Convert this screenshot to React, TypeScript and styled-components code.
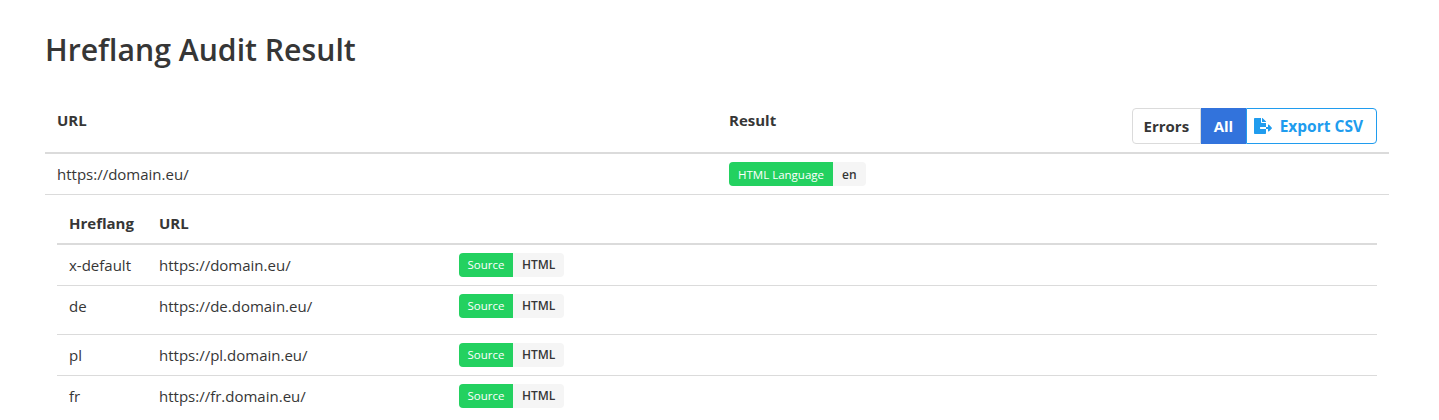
import styled, { createGlobalStyle } from "styled-components";
import { FaFileExport } from "react-icons/fa";

const rows = [
  { lang: "x-default", url: "https://domain.eu/" },
  { lang: "de", url: "https://de.domain.eu/", tall: true },
  { lang: "pl", url: "https://pl.domain.eu/" },
  { lang: "fr", url: "https://fr.domain.eu/" },
];

const App = () => {
  return (
    <Page>
      <GlobalStyle />
      <Title>Hreflang Audit Result</Title>
      <MainTable>
        <thead>
          <tr>
            <MainHead $width={648}>URL</MainHead>
            <MainHead>
              <HeadRow>
                <span>Result</span>
                <Actions>
                  <PlainButton>Errors</PlainButton>
                  <ActiveButton>All</ActiveButton>
                  <ExportButton>
                    <FaFileExport size={18} />
                    Export CSV
                  </ExportButton>
                </Actions>
              </HeadRow>
            </MainHead>
          </tr>
        </thead>
        <tbody>
          <tr>
            <MainCell>https://domain.eu/</MainCell>
            <MainCell>
              <Tags>
                <GreenTag $pad={9}>HTML Language</GreenTag>
                <GreyTag>en</GreyTag>
              </Tags>
            </MainCell>
          </tr>
          <tr>
            <NestedCell colSpan={2}>
              <SubTable>
                <thead>
                  <tr>
                    <SubHead $width={66}>Hreflang</SubHead>
                    <SubHead $width={276}>URL</SubHead>
                    <SubHead />
                  </tr>
                </thead>
                <tbody>
                  {rows.map((row) => (
                    <SubRow key={row.lang} $tall={row.tall}>
                      <SubCell>{row.lang}</SubCell>
                      <SubCell>{row.url}</SubCell>
                      <SubCell>
                        <Tags>
                          <GreenTag $pad={8.5}>Source</GreenTag>
                          <GreyTag>HTML</GreyTag>
                        </Tags>
                      </SubCell>
                    </SubRow>
                  ))}
                </tbody>
              </SubTable>
            </NestedCell>
          </tr>
        </tbody>
      </MainTable>
    </Page>
  );
};

export default App;

const GlobalStyle = createGlobalStyle`
  html, body {
    margin: 0;
    background: #fff;
    overflow: hidden;
  }
  body {
    font-family: "Open Sans", "Noto Sans", sans-serif;
    font-size: 15px;
    color: #363636;
  }
`;

const Page = styled.div`
  height: 420px;
  padding: 30px 50px 0 45px;
  box-sizing: border-box;
  overflow: hidden;
`;

const Title = styled.h1`
  margin: 0 0 38px;
  font-size: 30.2px;
  line-height: 40px;
  font-weight: 600;
  color: #363636;
`;

const MainTable = styled.table`
  width: 100%;
  border-collapse: collapse;
  table-layout: fixed;
`;

const MainHead = styled.th<{ $width?: number }>`
  width: ${(p) => (p.$width ? `${p.$width}px` : "auto")};
  height: 44px;
  padding: 0 12px;
  text-align: left;
  font-weight: 700;
  font-size: 15px;
  border-bottom: 2px solid #dbdbdb;
  vertical-align: top;
  line-height: 25px;
`;

const HeadRow = styled.div`
  display: flex;
  justify-content: space-between;
  align-items: flex-start;
`;

const Actions = styled.div`
  display: flex;
  height: 36px;
`;

const PlainButton = styled.button`
  font: inherit;
  font-weight: 700;
  padding: 0 11px;
  color: #363636;
  background: #fff;
  border: 1px solid #dbdbdb;
  border-radius: 4px 0 0 4px;
`;

const ActiveButton = styled.button`
  font: inherit;
  font-weight: 700;
  padding: 0 11.5px;
  color: #fff;
  background: #3273dc;
  border: 1px solid #3273dc;
`;

const ExportButton = styled.button`
  font: inherit;
  font-size: 15.5px;
  font-weight: 700;
  display: flex;
  align-items: center;
  gap: 8px;
  padding: 0 13px 0 7px;
  color: #209cee;
  background: #fff;
  border: 1px solid #209cee;
  border-radius: 0 4px 4px 0;
`;

const MainCell = styled.td`
  height: 40px;
  padding: 0 12px;
  font-size: 15px;
  border-bottom: 1px solid #dbdbdb;
`;

const NestedCell = styled.td`
  padding: 8px 12px 0;
`;

const SubTable = styled.table`
  width: 100%;
  border-collapse: collapse;
  table-layout: fixed;

  tbody tr:last-child td {
    border-bottom: 0;
  }
`;

const SubHead = styled.th<{ $width?: number }>`
  width: ${(p) => (p.$width ? `${p.$width}px` : "auto")};
  height: 40px;
  padding: 0 12px;
  text-align: left;
  font-size: 15px;
  font-weight: 700;
  border-bottom: 2px solid #dbdbdb;
`;

const SubRow = styled.tr<{ $tall?: boolean }>`
  height: ${(p) => (p.$tall ? "49px" : "41px")};
`;

const SubCell = styled.td`
  padding: 8px 12px;
  font-size: 15px;
  line-height: 24px;
  vertical-align: top;
  border-bottom: 1px solid #dbdbdb;
`;

const Tags = styled.div`
  display: flex;
  width: fit-content;
`;

const GreenTag = styled.span<{ $pad: number }>`
  display: flex;
  align-items: center;
  height: 24px;
  padding: 0 ${(p) => p.$pad}px;
  font-size: 11.5px;
  color: #fff;
  background: #23d160;
  border-radius: 4px 0 0 4px;
`;

const GreyTag = styled.span`
  display: flex;
  align-items: center;
  height: 24px;
  padding: 0 9px;
  font-size: 12px;
  font-weight: 600;
  color: #363636;
  background: #f5f5f5;
  border-radius: 0 4px 4px 0;
`;
